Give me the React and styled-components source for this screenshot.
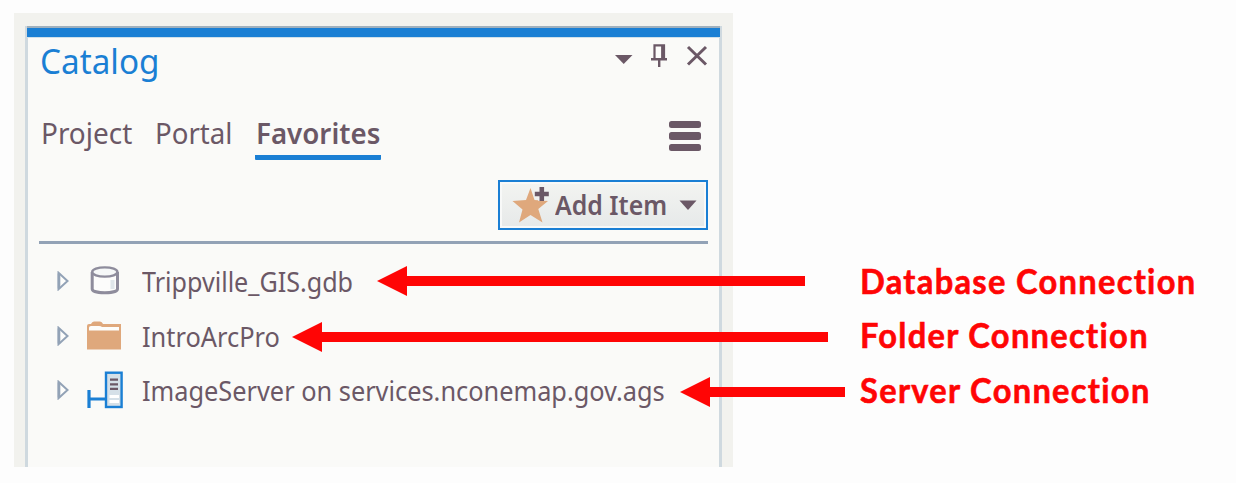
import React from 'react';
import styled, { createGlobalStyle } from 'styled-components';

const BLUE = '#1a7fd4';
const INK = '#6b5866';
const STEEL = '#92a2b6';
const SAND = '#dfa87c';
const RED = '#ff0505';

const GlobalStyle = createGlobalStyle`
  * { box-sizing: border-box; }
  body { margin: 0; background: #fdfdfd; font-family: 'Noto Sans', 'Open Sans', sans-serif; color: ${INK}; }
  svg { display: block; flex: none; }
`;

const Page = styled.div`
  position: relative;
  width: 1236px;
  height: 483px;
  padding: 13px 0 0 14px;
  overflow: hidden;
`;

const Frame = styled.div`
  width: 719px;
  height: 454px;
  padding: 13px 11px 0;
  background: #f2f2ee;
`;

const Panel = styled.section`
  height: 441px;
  border: solid #cfd9df;
  border-width: 0 3px;
  background: #fafaf8;
`;

const AccentBar = styled.div`
  height: 12px;
  margin: 0 -1px;
  border-top: 2px solid #9fb0bd;
  border-bottom: 1px solid #cfe0ea;
  background: ${BLUE};
`;

const Fit = styled.span`
  display: inline-block;
  transform: scaleX(${(p) => p.$x || 1});
  transform-origin: 0 50%;
  white-space: nowrap;
`;

const Header = styled.header`
  display: flex;
  justify-content: space-between;
  height: 75px;
  padding: 3px 11px 0 12px;
`;

const Title = styled.h1`
  margin: 0;
  width: 130px;
  font-size: 35px;
  font-weight: 400;
  line-height: 40px;
  color: ${BLUE};
`;

const WindowButtons = styled.div`
  display: flex;
  align-items: flex-start;
`;

const TabRow = styled.nav`
  display: flex;
  align-items: flex-start;
  height: 67px;
  padding: 0 18px 0 12px;
`;

const Tab = styled.div`
  width: ${(p) => p.$width}px;
  height: 47px;
  margin-right: ${(p) => p.$gap}px;
  padding-left: 1px;
  border-bottom: 5px solid ${(p) => (p.$active ? BLUE : 'transparent')};
  border-radius: 1px;
  font-size: 28.5px;
  font-weight: ${(p) => (p.$active ? 600 : 400)};
  line-height: 40px;
`;

const MenuButton = styled.div`
  display: flex;
  flex-direction: column;
  gap: 4px;
  width: 32px;
  margin: 8px 0 0 auto;
`;

const MenuLine = styled.span`
  height: 7.4px;
  border-radius: 2.5px;
  background: ${INK};
`;

const Toolbar = styled.div`
  display: flex;
  justify-content: flex-end;
  height: 64px;
  margin: 0 11px;
  border-bottom: 3px solid ${STEEL};
`;

const AddButton = styled.div`
  display: flex;
  align-items: center;
  width: 210px;
  height: 50px;
  padding: 0 9px 0 12px;
  border: 2px solid ${BLUE};
  background: linear-gradient(#f3f4f1, #e6e9e9);
  box-shadow: inset 0 0 0 2px #f8f9f8;
  font-size: 27.5px;
  font-weight: 600;
  line-height: 40px;
`;

const AddText = styled.span`
  width: 124px;
  margin-left: 5px;
`;

const Tree = styled.div`
  display: flex;
  flex-direction: column;
  padding: 10px 0 0 29px;
`;

const TreeRow = styled.div`
  display: flex;
  align-items: center;
  height: 54.5px;
  font-size: 27.5px;
  line-height: 40px;
`;

const TreeLabel = styled.span`
  padding-top: 2px;
`;

const IconSlot = styled.div`
  width: 40px;
  margin: 0 16px 0 16px;
`;

const Callouts = styled.div`
  position: absolute;
  top: 254px;
  left: 0;
  width: 1236px;
`;

const Callout = styled.div`
  display: flex;
  align-items: center;
  height: 54px;
  margin-bottom: ${(p) => p.$after}px;
  padding-left: ${(p) => p.$start}px;
`;

const ArrowHead = styled.span`
  flex: none;
  width: 30px;
  height: 30px;
  background: ${RED};
  clip-path: polygon(0 50%, 100% 0, 100% 100%);
`;

const ArrowShaft = styled.span`
  flex: none;
  width: ${(p) => p.$length}px;
  height: 10px;
  background: ${RED};
`;

const CalloutText = styled.span`
  margin-left: ${(p) => p.$gap}px;
  padding-bottom: ${(p) => p.$lift}px;
  color: ${RED};
  font-family: Lato, sans-serif;
  font-size: 34px;
  font-weight: 700;
  font-variant-ligatures: none;
  letter-spacing: 1.35px;
  line-height: 40px;
  -webkit-text-stroke: 0.6px ${RED};
`;

const Expander = () => (
  <svg width="13" height="20" viewBox="0 0 13 20">
    <path d="M1.5 1.8 L10.5 10 L1.5 18.2Z" fill="#fdfdfb" stroke={STEEL} strokeWidth="2" />
    <path d="M2 2.5V17.5" stroke={STEEL} strokeWidth="2.6" />
  </svg>
);

const DatabaseIcon = () => (
  <svg width="40" height="38" viewBox="0 0 40 38">
    <path d="M6.2 10V27C6.2 32 31.5 32 31.5 27V10" fill="#fcfcfb" stroke="#8e8c9c" strokeWidth="3" />
    <path d="M26.5 18V27" stroke="#dfe6ea" strokeWidth="4" />
    <ellipse cx="18.8" cy="10" rx="12.6" ry="4.6" fill="#f6f8f8" stroke="#8e8c9c" strokeWidth="2.4" />
  </svg>
);

const FolderIcon = () => (
  <svg width="40" height="38" viewBox="0 0 40 38">
    <path d="M1 9Q1 7 3 7H5Q6 4.5 8 4.5H14Q16 4.5 17 7H35V32.5H1Z" fill={SAND} />
    <path d="M3 13.5V10.7Q3 9 5 9H13Q15 9 16 10H33V13.5Z" fill="#fdfdfb" />
  </svg>
);

const ServerIcon = () => (
  <svg width="40" height="38" viewBox="0 0 40 38">
    <rect x="20" y="1.7" width="15.6" height="34.3" fill="#d5e0e8" stroke={BLUE} strokeWidth="2.4" />
    <path d="M24 8.7H32M24 13.3H32M24 17.9H32" stroke={INK} strokeWidth="2.2" />
    <path d="M23.5 25.5H33M23.5 30.5H33" stroke="#fff" strokeWidth="3" />
    <path d="M3 19V37M3 28H20" stroke={BLUE} strokeWidth="3.2" fill="none" />
  </svg>
);

const StarIcon = () => (
  <svg width="38" height="38" viewBox="0 0 38 38">
    <path d="M18.5 2L22.5 14L36 15L26.3 23L30.5 36.5L18.5 29L7 36.5L10.5 23.5L0.5 15L14 14Z" fill={SAND} />
    <path d="M29.8 1V15M22.8 8H36.8" stroke="#f2f3f1" strokeWidth="7" />
    <path d="M29.8 1V15M22.8 8H36.8" stroke={INK} strokeWidth="4.6" />
  </svg>
);

const WindowIcons = () => (
  <svg width="94" height="34" viewBox="0 0 94 34">
    <path d="M1 14H18.5L9.7 23Z" fill={INK} />
    <path d="M40.5 18V4.3H50V18" fill="#fcfcfb" stroke={INK} strokeWidth="2.2" />
    <path d="M48.8 4V18" stroke={INK} strokeWidth="3.4" />
    <path d="M37 18.3H53M45.2 18V26" stroke={INK} strokeWidth="2.4" />
    <path d="M74 6L92 23.5M92 6L74 23.5" stroke={INK} strokeWidth="3" />
  </svg>
);

const items = [
  { name: 'Trippville_GIS.gdb', Icon: DatabaseIcon, x: 0.913 },
  { name: 'IntroArcPro', Icon: FolderIcon, x: 0.923 },
  { name: 'ImageServer on services.nconemap.gov.ags', Icon: ServerIcon, x: 0.921 },
];

const callouts = [
  { text: 'Database Connection', start: 377, length: 398, gap: 55, x: 0.96, after: 2, lift: 0 },
  { text: 'Folder Connection', start: 292, length: 506, gap: 32, x: 0.96, after: 1, lift: 4 },
  { text: 'Server Connection', start: 680, length: 135, gap: 15, x: 0.96, after: 0, lift: 4 },
];

export default function App() {
  return (
    <Page>
      <GlobalStyle />
      <Frame>
        <Panel>
          <AccentBar />
          <Header>
            <Title><Fit $x={0.95}>Catalog</Fit></Title>
            <WindowButtons><WindowIcons /></WindowButtons>
          </Header>
          <TabRow>
            <Tab $width={92} $gap={22}><Fit $x={0.98}>Project</Fit></Tab>
            <Tab $width={78} $gap={23}><Fit $x={0.97}>Portal</Fit></Tab>
            <Tab $width={126} $gap={0} $active><Fit $x={0.972}>Favorites</Fit></Tab>
            <MenuButton>
              <MenuLine />
              <MenuLine />
              <MenuLine />
            </MenuButton>
          </TabRow>
          <Toolbar>
            <AddButton>
              <StarIcon />
              <AddText><Fit $x={0.905}>Add Item</Fit></AddText>
              <svg width="18" height="10" viewBox="0 0 18 10"><path d="M0.5 0.5H17.5L9 10Z" fill={INK} /></svg>
            </AddButton>
          </Toolbar>
          <Tree>
            {items.map(({ name, Icon, x }) => (
              <TreeRow key={name}>
                <Expander />
                <IconSlot><Icon /></IconSlot>
                <TreeLabel><Fit $x={x}>{name}</Fit></TreeLabel>
              </TreeRow>
            ))}
          </Tree>
        </Panel>
      </Frame>
      <Callouts>
        {callouts.map(({ text, start, length, gap, x, after, lift }) => (
          <Callout key={text} $start={start} $after={after}>
            <ArrowHead />
            <ArrowShaft $length={length} />
            <CalloutText $gap={gap} $lift={lift}><Fit $x={x}>{text}</Fit></CalloutText>
          </Callout>
        ))}
      </Callouts>
    </Page>
  );
}
